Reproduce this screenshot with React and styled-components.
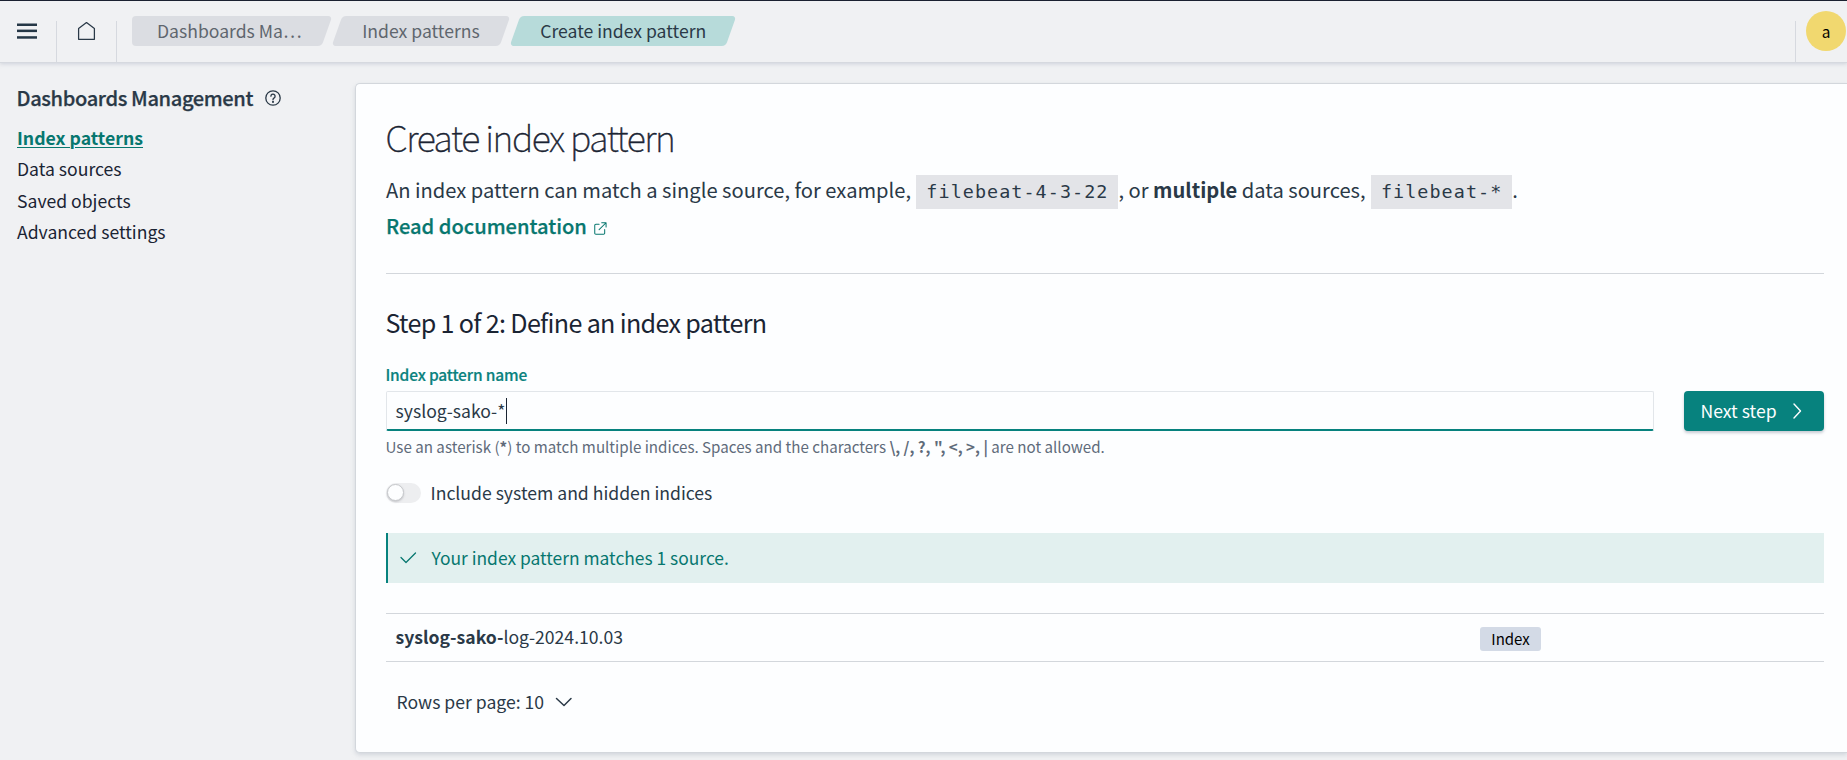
import React from "react";
import styled, { createGlobalStyle, css } from "styled-components";

const sans = '"Noto Sans CJK JP", "Open Sans", sans-serif';
const mono = '"DejaVu Sans Mono", "Liberation Mono", monospace';

const GlobalStyle = createGlobalStyle`
  *, *::before, *::after { box-sizing: border-box; }
  body { margin: 0; overflow: hidden; background: #f0f1f3; }
  h1, h2, p { margin: 0; font-weight: inherit; }
`;

const Page = styled.div`
  height: 760px;
  overflow: hidden;
  display: flex;
  flex-direction: column;
  color: #2a3947;
  font: 400 17.6px/1 ${sans};
`;

/* Header */
const Header = styled.header`
  flex: none;
  height: 63px;
  display: flex;
  align-items: flex-start;
  border-top: 1px solid #1a2030;
  border-bottom: 1px solid #d6d9df;
  box-shadow: 0 1px 4px rgba(152, 162, 179, 0.4);
`;

const HeaderCell = styled.div`
  width: ${(p) => p.$width}px;
  height: 61px;
  display: flex;
  padding: ${(p) => p.$padding};
  border-right: 1px solid transparent;
  border-image: linear-gradient(to bottom, transparent 20px, #d6d9df 20px) 1;
`;

const Crumbs = styled.nav`
  display: flex;
  gap: 12px;
  padding: 15px 0 0 15px;
`;

const Crumb = styled.span`
  position: relative;
  z-index: 0;
  width: ${(p) => p.$width}px;
  height: 30px;
  padding-left: ${(p) => (p.$first ? 25 : 24.2)}px;
  line-height: 30px;
  white-space: pre;
  color: ${(p) => (p.$current ? "#2a3947" : "#5f666e")};

  &::before {
    content: "";
    position: absolute;
    z-index: -1;
    inset: 0 -1px;
    border-radius: 4px;
    transform: skewX(-19.5deg);
    background: ${(p) => (p.$current ? "#b7dbda" : "#dbdde2")};
  }

  ${(p) =>
    p.$first &&
    css`
      &::after {
        content: "";
        position: absolute;
        z-index: -1;
        inset: 0 30px 0 0;
        border-radius: 4px;
        background: #dbdde2;
      }
      &::before {
        left: 30px;
      }
    `}
`;

const HeaderEnd = styled.div`
  margin-left: auto;
  display: flex;
`;

const Avatar = styled.div`
  width: 40px;
  height: 40px;
  margin: 10px 1px 0 10px;
  border-radius: 50%;
  background: #f1d86f;
  color: #000;
  font-size: 15.4px;
  line-height: 40px;
  text-align: center;
`;

/* Body */
const Body = styled.div`
  flex: 1;
  display: flex;
  align-items: flex-start;
`;

const Sidebar = styled.aside`
  flex: none;
  width: 355px;
  padding: 23px 0 0 16.5px;
`;

const SideTitle = styled.div`
  display: flex;
  align-items: center;
  gap: 12px;
  height: 24px;
  font-size: 20.1px;
  font-weight: 500;
  letter-spacing: -0.38px;
  line-height: 24px;
  -webkit-text-stroke: 0.25px currentColor;
`;

const SideNav = styled.nav`
  display: flex;
  flex-direction: column;
  align-items: flex-start;
  padding: 12px 0 0 0.5px;
`;

const SideLink = styled.a`
  line-height: 31.25px;
  color: #1a2433;
  ${(p) =>
    p.$active &&
    css`
      font-size: 17.69px;
      font-weight: 700;
      color: #07776f;
      text-decoration: underline;
      text-decoration-thickness: 1px;
      text-underline-offset: 2px;
    `}
`;

const Panel = styled.main`
  flex: 1;
  margin-top: 20px;
  padding: 32px 23px 35px 30px;
  background: #fdfeff;
  border: 1px solid #d3d7dc;
  border-right: 0;
  border-radius: 5px 0 0 5px;
  box-shadow: 0 2px 4px rgba(152, 162, 179, 0.35);
`;

const PageTitle = styled.h1`
  margin-left: -0.5px;
  color: #1a2433;
  font-size: 35.8px;
  font-weight: 100;
  letter-spacing: -1.37px;
  line-height: 40px;
  -webkit-text-stroke: 0.5px #1a2433;
`;

const Intro = styled.p`
  height: 72px;
  margin-top: 16px;
  font-size: 20.14px;
  line-height: 36px;
`;

const Code = styled.code`
  margin-left: 0.8px;
  padding: 6px 10px 7px;
  background: #e3e4e8;
  font-family: ${mono};
  font-size: 18.4px;
  letter-spacing: 1.07px;
  line-height: 1;
`;

const DocLink = styled.a`
  color: #07776f;
  font-size: 20.1px;
  font-weight: 500;
  -webkit-text-stroke: 0.25px currentColor;
  svg { margin-left: 7px; vertical-align: -1px; }
`;

const Rule = styled.hr`
  height: 1px;
  margin: 29px 0 28px;
  border: 0;
  background: #d3d7dc;
`;

const StepTitle = styled.h2`
  margin-left: -0.5px;
  color: #1a2433;
  font-size: 25.1px;
  letter-spacing: -0.67px;
  line-height: 40px;
`;

const Label = styled.label`
  display: block;
  margin: 22px 0 0 -0.5px;
  color: #0a827e;
  font-size: 15.5px;
  font-weight: 500;
  letter-spacing: -0.17px;
  line-height: 20px;
  -webkit-text-stroke: 0.2px currentColor;
`;

const FieldRow = styled.div`
  display: flex;
  gap: 30px;
  margin-top: 7px;
`;

const Field = styled.div`
  flex: 1;
  height: 40px;
  display: flex;
  align-items: center;
  padding-left: 8.5px;
  border: 1px solid #e2e6ea;
  border-bottom: 2px solid #07827e;
  border-radius: 2px;
`;

const Caret = styled.span`
  width: 1px;
  height: 26px;
  margin-left: 0.5px;
  background: #1a2433;
`;

const Button = styled.button`
  width: 140px;
  height: 40px;
  display: flex;
  align-items: center;
  justify-content: space-between;
  padding: 0 20px 0 16.5px;
  border: 0;
  border-radius: 4px;
  background: #07827e;
  box-shadow: 0 2px 3px rgba(100, 110, 130, 0.35);
  color: #fdfeff;
  font: 400 17.6px/40px ${sans};
`;

const HelpText = styled.p`
  margin: 5px 0 0 -0.5px;
  color: #5f6b7a;
  font-size: 15.15px;
  line-height: 20px;
  strong { font-weight: 700; }
`;

const SwitchRow = styled.div`
  display: flex;
  align-items: center;
  gap: 9.5px;
  height: 20px;
  margin-top: 27px;
`;

const Track = styled.span`
  width: 35px;
  height: 20px;
  padding: 1px;
  border-radius: 10px;
  background: #edeef0;
`;

const Thumb = styled.span`
  display: block;
  width: 17px;
  height: 17px;
  border: 1px solid #c6c8cb;
  border-radius: 50%;
  background: #fdfeff;
  box-shadow: 0 1px 2px rgba(120, 120, 130, 0.35);
`;

const Callout = styled.div`
  display: flex;
  align-items: center;
  height: 50px;
  margin-top: 30px;
  padding-left: 12px;
  border-left: 2px solid #07827e;
  background: #e2f0ef;
  color: #07776f;
  font-size: 17.42px;
  line-height: 30px;
  svg { margin-right: 14.500px; }
`;

const MatchRow = styled.div`
  display: grid;
  grid-template-columns: 1085px 1fr;
  align-items: center;
  height: 49px;
  margin-top: 30px;
  padding-left: 9px;
  border: solid #d3d7dc;
  border-width: 1px 0;
`;

const MatchName = styled.span`
  padding: 0 0 2px 0.5px;
  line-height: 30px;
  strong { font-weight: 700; }
`;

const Badge = styled.span`
  justify-self: start;
  width: 61px;
  height: 24px;
  margin-top: 3px;
  border-radius: 3px;
  background: #d3dae6;
  color: #000;
  font-size: 15px;
  line-height: 23px;
  text-align: center;
`;

const PageSize = styled.div`
  display: flex;
  align-items: center;
  gap: 11px;
  height: 30px;
  margin-top: 25px;
  padding-left: 10.5px;
  line-height: 30px;
`;

const Line = styled.svg.attrs({ fill: "none", stroke: "currentColor" })`
  flex: none;
  stroke-linecap: round;
  stroke-linejoin: round;
  stroke-width: ${(p) => p.$weight || 1.25};
`;

const navItems = ["Index patterns", "Data sources", "Saved objects", "Advanced settings"];

export default function App() {
  return (
    <>
      <GlobalStyle />
      <Page>
        <Header>
          <HeaderCell $width={57} $padding="22px 0 0 17px">
            <svg width="20" height="17" fill="#253746">
              <rect y="0.5" width="20" height="2.5" />
              <rect y="6.6" width="20" height="2.5" />
              <rect y="13.2" width="20" height="2.5" />
            </svg>
          </HeaderCell>
          <HeaderCell $width={60} $padding="20px 0 0 20px">
            <Line width="20" height="20" viewBox="0 0 20 20">
              <path d="M1.6 7.6 9.5 1.6l7.9 6V18.3H1.6Z" />
            </Line>
          </HeaderCell>
          <Crumbs>
            <Crumb $first $width={194}>Dashboards Ma…</Crumb>
            <Crumb $width={166}>Index patterns</Crumb>
            <Crumb $current $width={214}>Create index pattern</Crumb>
          </Crumbs>
          <HeaderEnd>
            <HeaderCell $width={1} $padding="0" />
            <Avatar>a</Avatar>
          </HeaderEnd>
        </Header>
        <Body>
          <Sidebar>
            <SideTitle>
              Dashboards Management
              <Line $weight={1.3} width="16" height="16" viewBox="0 0 16 16">
                <circle cx="8" cy="8" r="7.2" />
                <path d="M5.9 6.2a2.1 2.1 0 1 1 3.3 1.7C8.4 8.4 8 8.8 8 9.7" />
                <circle cx="8" cy="11.9" r="0.4" fill="currentColor" />
              </Line>
            </SideTitle>
            <SideNav>
              {navItems.map((item, i) => (
                <SideLink key={item} $active={i === 0}>{item}</SideLink>
              ))}
            </SideNav>
          </Sidebar>
          <Panel>
            <PageTitle>Create index pattern</PageTitle>
            <Intro>
              An index pattern can match a single source, for example, <Code>filebeat-4-3-22</Code>, or{" "}
              <strong>multiple</strong> data sources, <Code>filebeat-*</Code>.
              <br />
              <DocLink>
                Read documentation
                <Line $weight={1.1} width="13" height="13" viewBox="0 0 14 14">
                  <path d="M5.5 2.5H2A1.2 1.2 0 0 0 .8 3.7V12A1.2 1.2 0 0 0 2 13.2h8.3a1.2 1.2 0 0 0 1.2-1.2V8M8.3.8H13v4.7M13 .8 5.5 8.3" />
                </Line>
              </DocLink>
            </Intro>
            <Rule />
            <StepTitle>Step 1 of 2: Define an index pattern</StepTitle>
            <Label>Index pattern name</Label>
            <FieldRow>
              <Field>
                syslog-sako-*
                <Caret />
              </Field>
              <Button>
                Next step
                <Line $weight={1.4} width="14" height="16" viewBox="0 0 14 16">
                  <path d="M4 1l6.5 7L4 15" />
                </Line>
              </Button>
            </FieldRow>
            <HelpText>
              Use an asterisk (<strong>*</strong>) to match multiple indices. Spaces and the characters{" "}
              <strong>{'\\, /, ?, ", <, >, |'}</strong> are not allowed.
            </HelpText>
            <SwitchRow>
              <Track>
                <Thumb />
              </Track>
              Include system and hidden indices
            </SwitchRow>
            <Callout>
              <Line width="17" height="12" viewBox="0 0 17 12">
                <path d="M1 5.5 6 10.5 15.5 1" />
              </Line>
              Your index pattern matches 1 source.
            </Callout>
            <MatchRow>
              <MatchName>
                <strong>syslog-sako-</strong>log-2024.10.03
              </MatchName>
              <Badge>Index</Badge>
            </MatchRow>
            <PageSize>
              Rows per page: 10
              <Line $weight={1.5} width="18" height="10" viewBox="0 0 18 10">
                <path d="M1.500 1.500 9 8.500l7-7" />
              </Line>
            </PageSize>
          </Panel>
        </Body>
      </Page>
    </>
  );
}
